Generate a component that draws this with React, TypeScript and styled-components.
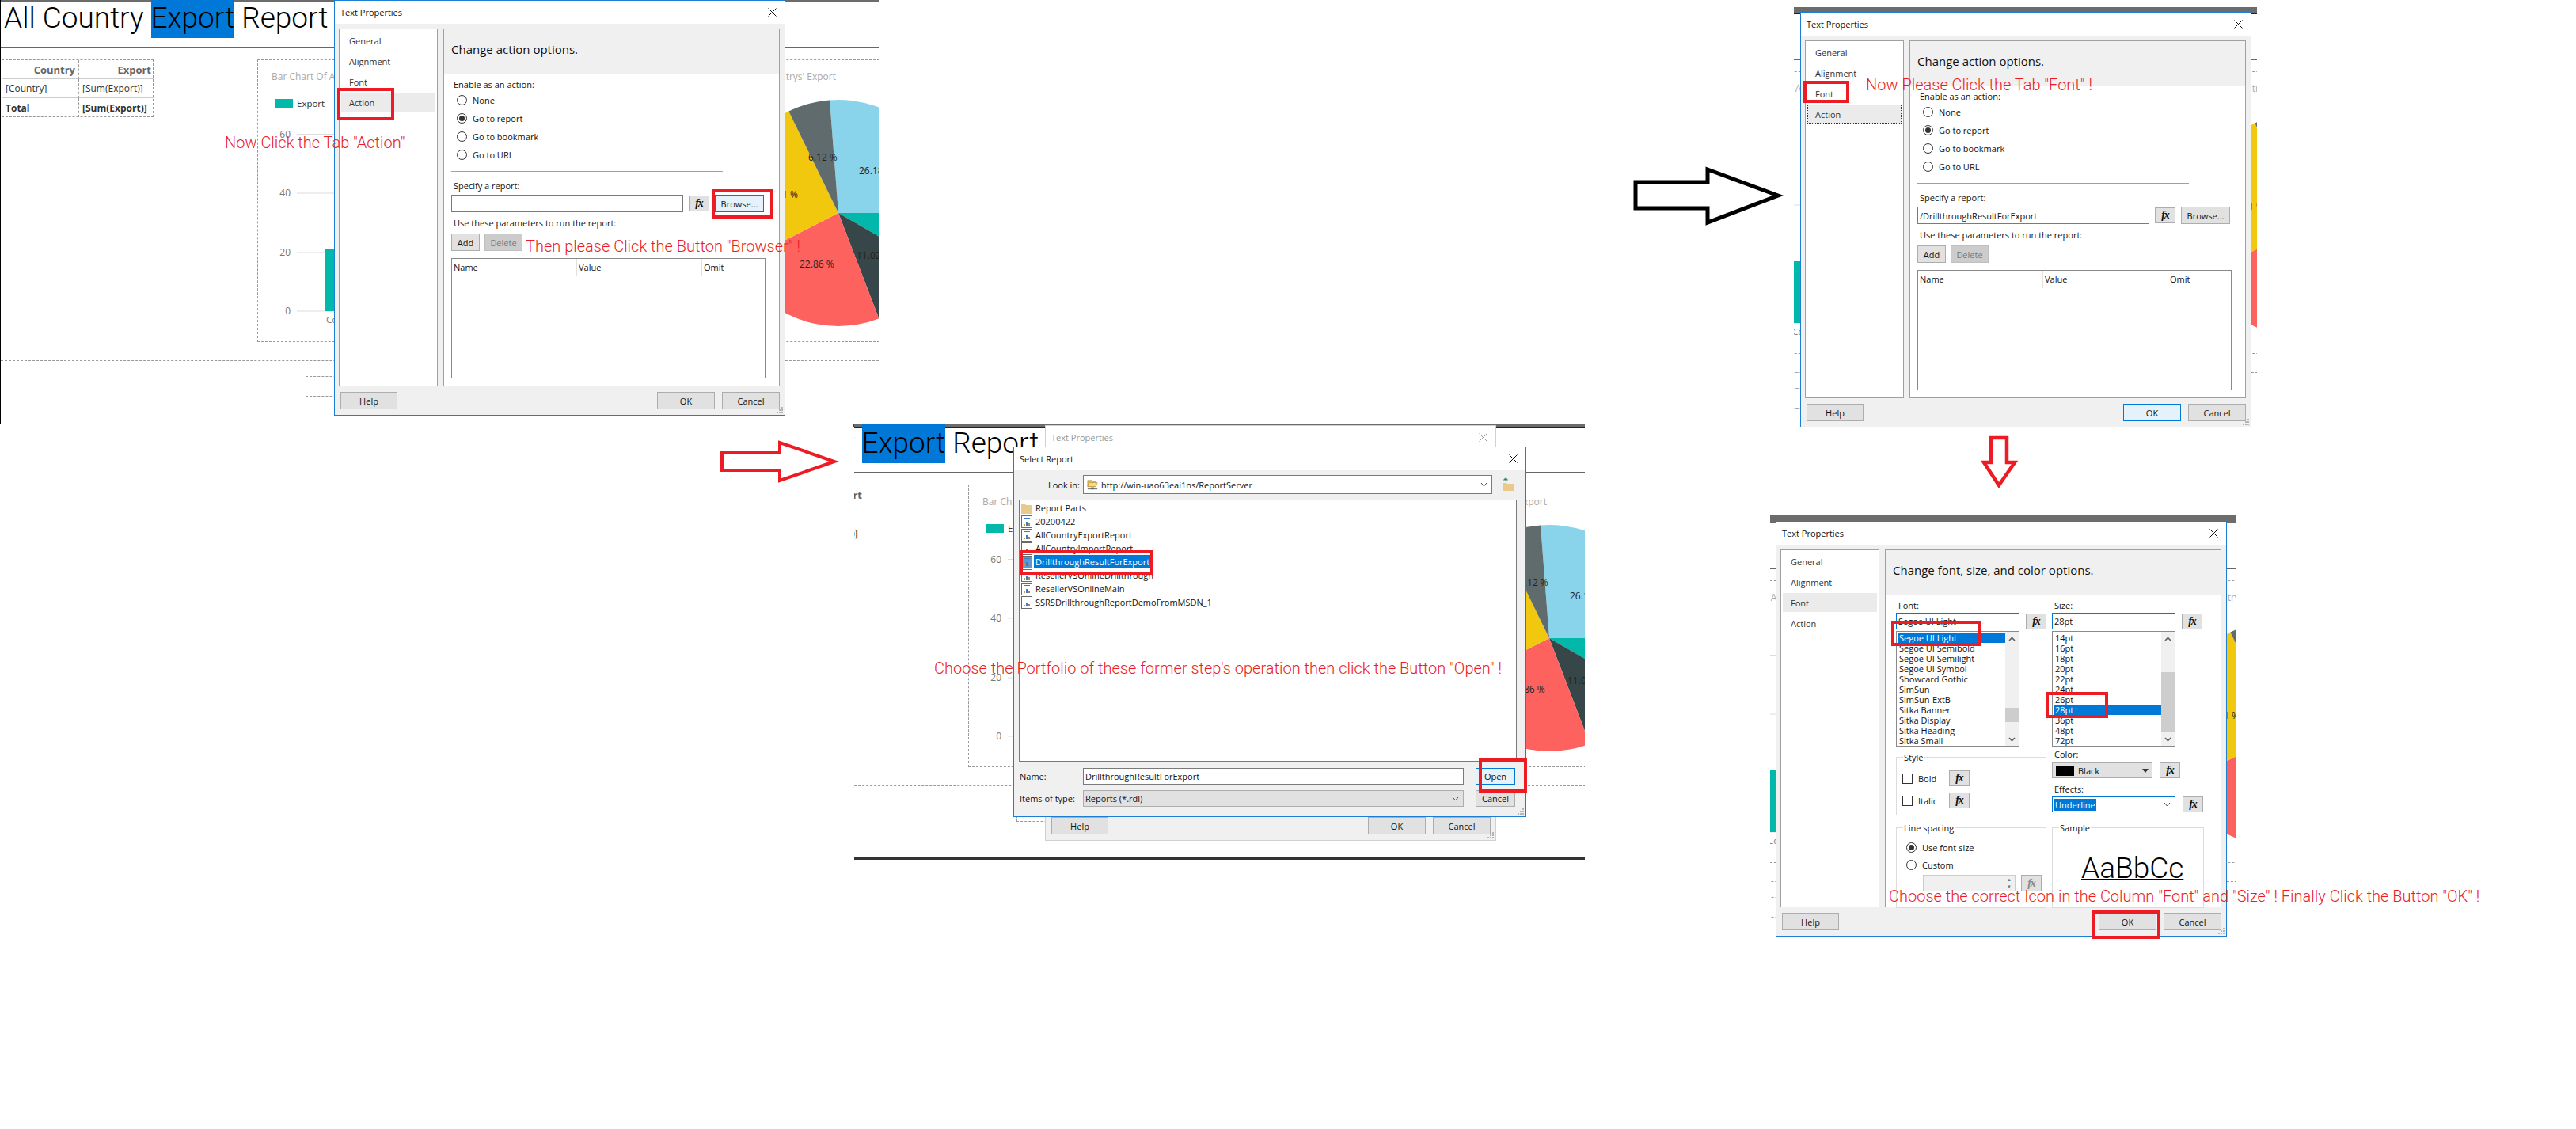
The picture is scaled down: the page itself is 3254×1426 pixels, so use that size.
import React from "react";
import styled, { createGlobalStyle } from "styled-components";

const UI = `"Open Sans", "Liberation Sans", sans-serif`;
const LIGHT = `Roboto, "Open Sans", sans-serif`;

const Global = createGlobalStyle`
  html, body { margin: 0; padding: 0; background: #fff; }
  body { width: 3254px; height: 1426px; overflow: hidden; font-family: ${UI}; font-size: 11px; color: #111; }
  * { box-sizing: border-box; }
`;

type Box = { $x: number; $y: number; $w: number; $h: number };

const Canvas = styled.div`position: relative; width: 3254px; height: 1426px; overflow: hidden;`;
const Shot = styled.section<Box>`
  position: absolute; overflow: hidden; background: #fff;
  left: ${p => p.$x}px; top: ${p => p.$y}px; width: ${p => p.$w}px; height: ${p => p.$h}px;
`;
const Marker = styled.div<Box>`
  position: absolute; border: 4px solid #ed1c24; pointer-events: none;
  left: ${p => p.$x}px; top: ${p => p.$y}px; width: ${p => p.$w}px; height: ${p => p.$h}px;
`;
const Note = styled.div<{ $x: number; $y: number; $sp?: number }>`
  position: absolute; left: ${p => p.$x}px; top: ${p => p.$y}px; white-space: nowrap;
  font-family: ${LIGHT}; font-weight: 300; font-size: 20px; line-height: 24px; color: #ed1c24;
  letter-spacing: ${p => p.$sp ?? 0}px;
`;
const ArrowSvg = styled.svg<Box>`
  position: absolute; left: ${p => p.$x}px; top: ${p => p.$y}px; width: ${p => p.$w}px; height: ${p => p.$h}px;
`;
const CornerTick = styled.div`position: absolute; left: 1078px; top: 535px; width: 32px; height: 4px; background: #444;`;

/* ---------- the report page behind the dialogs ---------- */
const Backdrop = styled.div<{ $srcX: number; $srcY: number }>`
  position: relative; width: 1110px; height: 560px; border-left: 1px solid #000; background: #fff;
  margin-left: ${p => -p.$srcX}px; margin-top: ${p => -p.$srcY}px;
  display: flex; flex-direction: column;
`;
const TopBar = styled.div`height: 11px; background: #6c6c6c; border-bottom: 1px solid #222; flex: none;`;
const TitleBand = styled.header`
  height: 58px; flex: none; border-bottom: 2px solid #666; padding-left: 4px; display: flex; align-items: flex-start;
`;
const ReportTitle = styled.h1`
  margin: 0; font-family: ${LIGHT}; font-weight: 300; font-size: 37px; line-height: 50px; padding-top: 0; margin-top: -5px;
  white-space: pre; color: #000;
`;
const Selected = styled.span`background: #0078d7; display: inline-block; height: 50px;`;
const ReportBody = styled.div`display: flex; padding-top: 14px; flex: none; align-items: flex-start;`;
const Matrix = styled.div`
  width: 192px; margin-left: 1px; display: grid; grid-template-columns: 96px 96px; grid-auto-rows: 24px;
  border: 1px dashed #999; border-right: 1px dashed #999; flex: none; height: 73px;
`;
const Cell = styled.div<{ $head?: boolean; $bold?: boolean; $right?: boolean; $last?: boolean }>`
  display: flex; align-items: center; padding: 0 4px; white-space: nowrap; overflow: hidden;
  justify-content: ${p => (p.$head ? "flex-end" : "flex-start")};
  font-size: ${p => (p.$head ? 13 : 12)}px; font-weight: ${p => (p.$head || p.$bold ? 700 : 400)};
  color: ${p => (p.$head ? "#666" : "#333")};
  border-bottom: ${p => (p.$last ? "0" : "1px solid #ccc")};
  border-left: ${p => (p.$right ? "1px dashed #999" : "0")};
`;
const ChartFrame = styled.div`
  margin-left: 131px; width: 786px; height: 357px; flex: none;
  border: 1px dashed #999; border-right: 0;
`;
const ChartSvg = styled.svg`display: block; width: 785px; height: 355px;`;
const DottedRule = styled.div`height: 0; margin-top: 23px; border-top: 1px dashed #999; flex: none;`;
const FooterBox = styled.div`
  width: 110px; height: 26px; margin: 19px 0 0 385px; border: 1px dashed #999; flex: none;
`;
const BottomBar = styled.div`height: 3px; background: #333; margin-top: 45px; flex: none;`;

const polar = (a: number, r = 143) => {
  const t = ((a - 90) * Math.PI) / 180;
  return [1059 + r * Math.cos(t), 269 + r * Math.sin(t)];
};
const slice = (a: number, b: number) => {
  const [x1, y1] = polar(a);
  const [x2, y2] = polar(b);
  return `M1059 269L${x1} ${y1}A143 143 0 ${b - a > 180 ? 1 : 0} 1 ${x2} ${y2}Z`;
};
const pie: [number, number, string][] = [
  [-4.4, 90, "#8ad4eb"], [90, 120, "#01b8aa"], [120, 159, "#374649"],
  [159, 243, "#fd625e"], [243, 334, "#f2c80f"], [334, 355.6, "#5f6b6d"],
];
const Report = () => (
  <>
    <TopBar />
    <TitleBand>
      <ReportTitle>All Country <Selected>Export</Selected> Report</ReportTitle>
    </TitleBand>
    <ReportBody>
      <Matrix>
        <Cell $head>Country</Cell><Cell $head $right>Export</Cell>
        <Cell>[Country]</Cell><Cell $right>[Sum(Export)]</Cell>
        <Cell $bold $last>Total</Cell><Cell $bold $right $last>[Sum(Export)]</Cell>
      </Matrix>
      <ChartFrame>
        <ChartSvg viewBox="326 76 785 355" fontFamily={UI} fontSize="11.5">
          <text x="343" y="101" fill="#aaa" fontSize="12">Bar Chart Of All Countrys' Export</text>
          <rect x="348" y="125" width="22" height="11" fill="#01b8aa" />
          <text x="375" y="135" fill="#333">Export</text>
          {[[60, 169.5], [40, 244], [20, 319], [0, 393]].map(([v, y]) => (
            <g key={v}>
              <text x="367" y={y + 4} textAnchor="end" fill="#777" fontSize="12">{v}</text>
              <line x1="375" x2="520" y1={y} y2={y} stroke="#ddd" />
            </g>
          ))}
          <rect x="410" y="315" width="60" height="78" fill="#01b8aa" />
          <text x="412" y="408" fill="#777">Country</text>
          <text x="1056" y="101" textAnchor="end" fill="#aaa" fontSize="12">Pie Chart Of All Countrys' Export</text>
          {pie.map(([a, b, c]) => <path key={c} d={slice(a, b)} fill={c} />)}
          <g fill="#222" fontSize="12">
            <text x="1021" y="203">6.12 %</text>
            <text x="1085" y="220">26.18 %</text>
            <text x="1008" y="250" textAnchor="end">24.71 %</text>
            <text x="1010" y="338">22.86 %</text>
            <text x="1082" y="327">11.02 %</text>
          </g>
        </ChartSvg>
      </ChartFrame>
    </ReportBody>
    <DottedRule />
    <FooterBox />
    <BottomBar />
  </>
);

/* ---------- dialog chrome ---------- */
const DialogShell = styled.div<{ $faded?: boolean; $w: number; $h: number; $x: number; $y: number }>`
  position: absolute; left: ${p => p.$x}px; top: ${p => p.$y}px; width: ${p => p.$w}px; height: ${p => p.$h}px;
  background: #f0f0f0; border: 1px solid ${p => (p.$faded ? "#d0d0d0" : "#1a7fd4")};
  display: flex; flex-direction: column;
`;
const TitleBar = styled.div<{ $faded?: boolean }>`
  height: 29px; flex: none; background: #fff; padding: 0 10px 0 7px; display: flex; align-items: center; justify-content: space-between;
  font-size: 11px; color: ${p => (p.$faded ? "#999" : "#111")};
`;
const CloseIcon = ({ faded }: { faded?: boolean }) => (
  <svg width="11" height="11" viewBox="0 0 11 11"><path d="M.5.5l10 10M10.5.5l-10 10" stroke={faded ? "#999" : "#111"} fill="none" /></svg>
);
const Columns = styled.div`display: flex; gap: 7px; margin: 6px 0 0 5px; height: 452px; flex: none;`;
const Sidebar = styled.nav`
  width: 125px; flex: none; background: #fff; border: 1px solid #a0a0a0; padding: 2px 2px; display: flex; flex-direction: column; gap: 2px;
`;
const SideItem = styled.div<{ $on?: boolean; $dotted?: boolean }>`
  height: 24px; display: flex; align-items: center; padding-left: 10px; color: #333;
  background: ${p => (p.$on ? "#ebebeb" : "transparent")};
  outline: ${p => (p.$dotted ? "1px dotted #333" : "none")}; outline-offset: -1px;
`;
const Main = styled.main`width: 425px; flex: none; background: #fff; border: 1px solid #a0a0a0; display: flex; flex-direction: column;`;
const PaneHead = styled.div`
  height: 57px; flex: none; background: #f0f0f0; padding: 14px 0 0 9px; font-size: 15px; line-height: 22px; color: #111;
`;
const Footer = styled.footer`display: flex; gap: 9px; padding: 7px 0 0 7px; width: 562px;`;
const Btn = styled.div<{ $w: number; $h?: number; $primary?: boolean; $off?: boolean }>`
  width: ${p => p.$w}px; height: ${p => p.$h ?? 22}px; flex: none; display: flex; align-items: center; justify-content: center;
  background: ${p => (p.$primary ? "#e5f1fb" : p.$off ? "#cccccc" : "#e1e1e1")};
  border: 1px solid ${p => (p.$primary ? "#0078d7" : p.$off ? "#bfbfbf" : "#adadad")};
  color: ${p => (p.$off ? "#777" : "#111")};
`;
const PushRight = styled.div`margin-left: auto;`;
const FxBtn = styled.div<{ $off?: boolean; $h?: number }>`
  width: 26px; height: ${p => p.$h ?? 20}px; flex: none; display: flex; align-items: center; justify-content: center;
  background: #e1e1e1; border: 1px solid #adadad; font: italic 700 14px "Liberation Serif", serif;
  color: ${p => (p.$off ? "#888" : "#111")}; letter-spacing: -1px;
`;
const Grip = styled.svg`position: absolute; right: 1px; bottom: 1px; width: 10px; height: 10px;`;
const GripIcon = () => (
  <Grip viewBox="0 0 10 10" fill="#b5b5b5">
    <rect x="7" y="1" width="2" height="2" /><rect x="4" y="4" width="2" height="2" /><rect x="7" y="4" width="2" height="2" />
    <rect x="1" y="7" width="2" height="2" /><rect x="4" y="7" width="2" height="2" /><rect x="7" y="7" width="2" height="2" />
  </Grip>
);

const Pane = styled.div`padding: 5px 0 0 9px; display: flex; flex-direction: column;`;
const FieldLabel = styled.div<{ $top?: number }>`
  height: 16px; line-height: 16px; margin: ${p => p.$top ?? 0}px 0 0 3px; color: #111; white-space: nowrap;
`;
const RadioRow = styled.label`display: flex; align-items: center; gap: 7px; height: 23px; padding-left: 7px;`;
const Radio = styled.span<{ $on?: boolean }>`
  width: 13px; height: 13px; flex: none; border-radius: 50%; border: 1px solid #333; background: #fff; position: relative;
  &::after {
    content: ""; position: absolute; inset: 2px; border-radius: 50%; background: #333; display: ${p => (p.$on ? "block" : "none")};
  }
`;
const Rule = styled.div`width: 343px; height: 1px; background: #a0a0a0; margin-top: 9px;`;
const FieldRow = styled.div<{ $top?: number; $gap?: number }>`
  display: flex; align-items: center; gap: ${p => p.$gap ?? 7}px; margin-top: ${p => p.$top ?? 0}px;
`;
const TextInput = styled.div<{ $w: number; $h?: number; $focus?: boolean; $off?: boolean }>`
  width: ${p => p.$w}px; height: ${p => p.$h ?? 22}px; flex: none; display: flex; align-items: center; padding-left: 2px; overflow: hidden;
  background: ${p => (p.$off ? "#f0f0f0" : "#fff")};
  border: 1px solid ${p => (p.$focus ? "#0078d7" : p.$off ? "#ccc" : "#7a7a7a")}; white-space: nowrap;
`;
const ParamTable = styled.div`width: 397px; height: 152px; border: 1px solid #8a8a8a; margin-top: 9px; flex: none;`;
const ParamHead = styled.div`display: grid; grid-template-columns: 158px 158px 1fr; height: 22px;`;
const ParamCol = styled.div<{ $end?: boolean }>`
  padding: 3px 0 0 2px; border-right: ${p => (p.$end ? "0" : "1px solid #e0e0e0")};
`;

const ActionPane = ({ value, focusBrowse }: { value?: string; focusBrowse?: boolean }) => (
  <Pane>
    <FieldLabel>Enable as an action:</FieldLabel>
    <RadioRow><Radio />None</RadioRow>
    <RadioRow><Radio $on />Go to report</RadioRow>
    <RadioRow><Radio />Go to bookmark</RadioRow>
    <RadioRow><Radio />Go to URL</RadioRow>
    <Rule />
    <FieldLabel $top={10}>Specify a report:</FieldLabel>
    <FieldRow $top={3}>
      <TextInput $w={293}>{value}</TextInput>
      <FxBtn>fx</FxBtn>
      <Btn $w={62} $primary={focusBrowse}>Browse...</Btn>
    </FieldRow>
    <FieldLabel $top={6}>Use these parameters to run the report:</FieldLabel>
    <FieldRow $top={5} $gap={6}>
      <Btn $w={36}>Add</Btn>
      <Btn $w={48} $off>Delete</Btn>
    </FieldRow>
    <ParamTable>
      <ParamHead>
        <ParamCol>Name</ParamCol><ParamCol>Value</ParamCol><ParamCol $end>Omit</ParamCol>
      </ParamHead>
    </ParamTable>
  </Pane>
);

/* ---------- font tab ---------- */
const FontGrid = styled.div`display: grid; grid-template-columns: 190px 192px; column-gap: 7px; padding: 5px 0 0 13px;`;
const Col = styled.div`display: flex; flex-direction: column;`;
const ListBox = styled.div`
  width: 156px; height: 146px; margin-top: 2px; border: 1px solid #8a8a8a; background: #fff; display: flex; flex: none; overflow: hidden;
`;
const ListRows = styled.div`flex: 1; padding-top: 1px; min-width: 0;`;
const ListRow = styled.div<{ $on?: boolean }>`
  height: 13px; line-height: 13px; padding-left: 2px; margin-left: 1px; white-space: nowrap;
  background: ${p => (p.$on ? "#0078d7" : "transparent")}; color: ${p => (p.$on ? "#fff" : "#111")};
`;
const ScrollTrack = styled.div`width: 17px; flex: none; background: #f0f0f0; display: flex; flex-direction: column; position: relative;`;
const Thumb = styled.div<{ $top: number; $h: number }>`
  position: absolute; left: 0; right: 0; top: ${p => p.$top}px; height: ${p => p.$h}px; background: #cdcdcd;
`;
const Chevron = styled.svg<{ $down?: boolean }>`
  width: 9px; height: 6px; position: absolute; left: 4px;
  ${p => (p.$down ? "bottom: 5px; transform: rotate(180deg);" : "top: 6px;")}
`;
const Scroll = ({ top, h }: { top: number; h: number }) => (
  <ScrollTrack>
    <Thumb $top={top} $h={h} />
    <Chevron viewBox="0 0 9 6"><path d="M1 5l3.5-3.5L8 5" stroke="#606060" strokeWidth="1.6" fill="none" /></Chevron>
    <Chevron $down viewBox="0 0 9 6"><path d="M1 5l3.5-3.5L8 5" stroke="#606060" strokeWidth="1.6" fill="none" /></Chevron>
  </ScrollTrack>
);
const Group = styled.div<{ $h: number; $top: number }>`
  position: relative; height: ${p => p.$h}px; margin-top: ${p => p.$top}px; border: 1px solid #dcdcdc; flex: none;
`;
const Legend = styled.span`
  position: absolute; left: 8px; top: -8px; height: 16px; line-height: 16px; padding: 0 1px; background: #fff;
`;
const CheckRow = styled.div<{ $y: number }>`
  position: absolute; left: 7px; top: ${p => p.$y}px; display: flex; align-items: center; height: 20px;
`;
const Check = styled.span`width: 13px; height: 13px; border: 1px solid #333; background: #fff; margin-right: 7px; flex: none;`;
const CheckLabel = styled.span`width: 39px; flex: none;`;
const SpacingRadios = styled.div`position: absolute; left: 12px; top: 14px; width: 170px;`;
const SpacingRow = styled(RadioRow)`padding-left: 0; height: 21.5px;`;
const SpinRow = styled(FieldRow)`margin: 2px 0 0 21px;`;
const SpinArrows = styled.span`margin-left: auto; width: 14px; height: 100%; font-size: 6px; line-height: 9px; color: #777; text-align: center; display: flex; flex-direction: column; justify-content: center;`;
const ColorSelect = styled.div`
  width: 127px; height: 20px; flex: none; background: #e1e1e1; border: 1px solid #adadad; display: flex; align-items: center; padding-left: 4px; gap: 5px; position: relative;
`;
const Swatch = styled.span`width: 23px; height: 13px; background: #000;`;
const Caret = styled.span`
  position: absolute; right: 4px; top: 7px; width: 0; height: 0; border: 4px solid transparent; border-top: 5px solid #333; border-bottom: 0;
`;
const SelText = styled.span`background: #0078d7; color: #fff; padding: 0 1px;`;
const DownV = styled.svg`position: absolute; right: 5px; top: 50%; margin-top: -3px; width: 9px; height: 6px;`;
const VIcon = () => <DownV viewBox="0 0 9 6"><path d="M1 1l3.5 4L8 1" stroke="#444" fill="none" /></DownV>;
const InputWrap = styled(TextInput)`position: relative;`;
const SampleText = styled.div`
  position: absolute; left: 36px; top: 30px; font-family: ${LIGHT}; font-weight: 300; font-size: 37px; line-height: 42px; text-decoration: underline; text-decoration-thickness: 2px; color: #000; white-space: nowrap;
`;

const fonts = ["Segoe UI Light", "Segoe UI Semibold", "Segoe UI Semilight", "Segoe UI Symbol", "Showcard Gothic", "SimSun", "SimSun-ExtB", "Sitka Banner", "Sitka Display", "Sitka Heading", "Sitka Small"];
const sizes = ["14pt", "16pt", "18pt", "20pt", "22pt", "24pt", "26pt", "28pt", "36pt", "48pt", "72pt"];

const FontPane = () => (
  <FontGrid>
    <Col>
      <FieldLabel>Font:</FieldLabel>
      <FieldRow $top={1} $gap={8}>
        <TextInput $w={156} $h={21} $focus>Segoe UI Light</TextInput>
        <FxBtn>fx</FxBtn>
      </FieldRow>
      <ListBox>
        <ListRows>{fonts.map(f => <ListRow key={f} $on={f === "Segoe UI Light"}>{f}</ListRow>)}</ListRows>
        <Scroll top={96} h={18} />
      </ListBox>
      <Group $h={74} $top={13}>
        <Legend>Style</Legend>
        <CheckRow $y={16}><Check /><CheckLabel>Bold</CheckLabel><FxBtn>fx</FxBtn></CheckRow>
        <CheckRow $y={44}><Check /><CheckLabel>Italic</CheckLabel><FxBtn>fx</FxBtn></CheckRow>
      </Group>
      <Group $h={102} $top={15}>
        <Legend>Line spacing</Legend>
        <SpacingRadios>
          <SpacingRow><Radio $on />Use font size</SpacingRow>
          <SpacingRow><Radio />Custom</SpacingRow>
          <SpinRow>
            <TextInput $w={117} $h={21} $off><SpinArrows><span>▲</span><span>▼</span></SpinArrows></TextInput>
            <FxBtn $off $h={21}>fx</FxBtn>
          </SpinRow>
        </SpacingRadios>
      </Group>
    </Col>
    <Col>
      <FieldLabel>Size:</FieldLabel>
      <FieldRow $top={1} $gap={8}>
        <TextInput $w={156} $h={21} $focus>28pt</TextInput>
        <FxBtn>fx</FxBtn>
      </FieldRow>
      <ListBox>
        <ListRows>{sizes.map(s => <ListRow key={s} $on={s === "28pt"}>{s}</ListRow>)}</ListRows>
        <Scroll top={51} h={75} />
      </ListBox>
      <FieldLabel $top={2}>Color:</FieldLabel>
      <FieldRow $top={2} $gap={9}>
        <ColorSelect><Swatch />Black<Caret /></ColorSelect>
        <FxBtn>fx</FxBtn>
      </FieldRow>
      <FieldLabel $top={6}>Effects:</FieldLabel>
      <FieldRow $top={1} $gap={9}>
        <InputWrap $w={156} $h={20} $focus><SelText>Underline</SelText><VIcon /></InputWrap>
        <FxBtn>fx</FxBtn>
      </FieldRow>
      <Group $h={102} $top={19}>
        <Legend>Sample</Legend>
        <SampleText>AaBbCc</SampleText>
      </Group>
    </Col>
  </FontGrid>
);

const TextProperties = ({ tab, children, dotted, primaryOk, faded }: { tab: "action" | "font"; children?: React.ReactNode; dotted?: boolean; primaryOk?: boolean; faded?: boolean }) => (
  <DialogShell $x={421} $y={8} $w={570} $h={525} $faded={faded}>
    <TitleBar $faded={faded}>Text Properties<CloseIcon faded={faded} /></TitleBar>
    <Columns>
      <Sidebar>
        <SideItem>General</SideItem>
        <SideItem>Alignment</SideItem>
        <SideItem $on={tab === "font"}>Font</SideItem>
        <SideItem $on={tab === "action"} $dotted={dotted}>Action</SideItem>
      </Sidebar>
      <Main>
        <PaneHead>{tab === "font" ? "Change font, size, and color options." : "Change action options."}</PaneHead>
        {children}
      </Main>
    </Columns>
    <Footer>
      <Btn $w={72}>Help</Btn>
      <PushRight />
      <Btn $w={73} $primary={primaryOk}>OK</Btn>
      <Btn $w={73}>Cancel</Btn>
    </Footer>
    <GripIcon />
  </DialogShell>
);

/* ---------- select report dialog ---------- */
const LookRow = styled.div`display: flex; align-items: center; margin-top: 6px; height: 24px; padding-left: 7px; flex: none;`;
const RowLabel = styled.div<{ $right?: boolean }>`
  width: 80px; flex: none; text-align: ${p => (p.$right ? "right" : "left")}; padding-right: ${p => (p.$right ? 4 : 0)}px; white-space: nowrap;
`;
const Combo = styled.div`
  width: 517px; height: 24px; flex: none; background: #fff; border: 1px solid #7a7a7a; display: flex; align-items: center; gap: 4px; padding-left: 4px; position: relative;
`;
const UpFolder = styled.svg`width: 18px; height: 18px; margin-left: 11px; flex: none;`;
const FileList = styled.div`
  width: 629px; height: 331px; flex: none; margin: 7px 0 0 6px; background: #fff; border: 1px solid #7a7a7a; padding: 1px 0 0 2px;
`;
const FileRow = styled.div`height: 17px; display: flex; align-items: center; gap: 2px; white-space: nowrap;`;
const FileName = styled.span<{ $on?: boolean }>`
  padding: 0 2px; height: 17px; line-height: 17px;
  background: ${p => (p.$on ? "#0078d7" : "transparent")}; color: ${p => (p.$on ? "#fff" : "#111")};
`;
const FileSvg = styled.svg`width: 14px; height: 16px; flex: none;`;
const BottomGrid = styled.div`
  display: grid; grid-template-columns: 80px 481px 50px; column-gap: 0; grid-auto-rows: 21px; row-gap: 7px; padding: 8px 0 0 7px; align-items: center;
`;
const SideBtn = styled(Btn)`margin-left: 15px;`;
const TypeSelect = styled.div`
  height: 21px; background: #e1e1e1; border: 1px solid #adadad; display: flex; align-items: center; padding-left: 2px; position: relative;
`;

const ReportFile = ({ on }: { on?: boolean }) => (
  <FileSvg viewBox="0 0 14 16">
    <rect x=".5" y=".5" width="13" height="15" fill={on ? "#5b9bd5" : "#fff"} stroke="#6a6a6a" />
    <rect x="3" y="3" width="8" height="1" fill="#3a7dc2" />
    <rect x="3" y="11" width="2" height="2" fill="#c99a3c" /><rect x="6" y="8" width="2" height="5" fill="#3a7dc2" /><rect x="9" y="10" width="2" height="3" fill="#8a8a8a" />
  </FileSvg>
);
const Folder = () => (
  <FileSvg viewBox="0 0 14 16"><path d="M0 3h5l1 1h8v11H0z" fill="#eac98c" /></FileSvg>
);
const files = ["20200422", "AllCountryExportReport", "AllCountryImportReport", "DrillthroughResultForExport", "ResellerVSOnlineDrillthrough", "ResellerVSOnlineMain", "SSRSDrillthroughReportDemoFromMSDN_1"];

const SelectReport = () => (
  <DialogShell $x={201} $y={28} $w={648} $h={468}>
    <TitleBar>Select Report<CloseIcon /></TitleBar>
    <LookRow>
      <RowLabel $right>Look in:</RowLabel>
      <Combo>
        <FileSvg viewBox="0 0 16 16">
          <path d="M1 2h6l1 1h5v8H1z" fill="#e8b84a" stroke="#a07a20" strokeWidth=".6" /><path d="M3 5h12l-2 6H1z" fill="#f7d98a" stroke="#a07a20" strokeWidth=".6" />
          <rect x="6" y="12" width="4" height="3" fill="#4a8fd0" /><rect x="1" y="14" width="14" height="1" fill="#555" />
        </FileSvg>
        http://win-uao63eai1ns/ReportServer
        <VIcon />
      </Combo>
      <UpFolder viewBox="0 0 18 18">
        <path d="M2 7h5l1 1h8v9H2z" fill="#eac98c" /><path d="M6 5V1M6 1L3.5 3.5M6 1l2.5 2.5" stroke="#2f8f6f" strokeWidth="1.4" fill="none" />
      </UpFolder>
    </LookRow>
    <FileList>
      <FileRow><Folder /><FileName>Report Parts</FileName></FileRow>
      {files.map(f => (
        <FileRow key={f}><ReportFile on={f === "DrillthroughResultForExport"} /><FileName $on={f === "DrillthroughResultForExport"}>{f}</FileName></FileRow>
      ))}
    </FileList>
    <BottomGrid>
      <RowLabel>Name:</RowLabel>
      <TextInput $w={481} $h={21}>DrillthroughResultForExport</TextInput>
      <SideBtn $w={50} $h={21} $primary>Open</SideBtn>
      <RowLabel>Items of type:</RowLabel>
      <TypeSelect>Reports (*.rdl)<VIcon /></TypeSelect>
      <SideBtn $w={50} $h={21}>Cancel</SideBtn>
    </BottomGrid>
    <GripIcon />
  </DialogShell>
);

export default function App() {
  return (
    <Canvas>
      <Global />
      <Shot $x={0} $y={0} $w={1110} $h={535}>
        <Backdrop $srcX={0} $srcY={8}>
          <Report />
          <TextProperties tab="action"><ActionPane focusBrowse /></TextProperties>
        </Backdrop>
      </Shot>
      <CornerTick />

      <Shot $x={1079} $y={536} $w={923} $h={550}>
        <Backdrop $srcX={181} $srcY={7}>
          <Report />
          <TextProperties tab="action" faded><ActionPane value="" /></TextProperties>
        </Backdrop>
        <SelectReport />
      </Shot>

      <Shot $x={2266} $y={9} $w={585} $h={530}>
        <Backdrop $srcX={414} $srcY={2}>
          <Report />
          <TextProperties tab="action" dotted primaryOk><ActionPane value="/DrillthroughResultForExport" /></TextProperties>
        </Backdrop>
      </Shot>

      <Shot $x={2236} $y={650} $w={588} $h={535}>
        <Backdrop $srcX={415} $srcY={0}>
          <Report />
          <TextProperties tab="font" primaryOk={false}><FontPane /></TextProperties>
        </Backdrop>
      </Shot>

      <ArrowSvg $x={905} $y={552} $w={156} $h={62} viewBox="905 552 156 62">
        <path d="M912 572H985V559L1054 583L985 607V594H912Z" fill="#fff" stroke="#ed1c24" strokeWidth="4" />
      </ArrowSvg>
      <ArrowSvg $x={2058} $y={205} $w={196} $h={85} viewBox="2058 205 196 85">
        <path d="M2066 230H2157V214L2246 247L2157 281V263H2066Z" fill="#fff" stroke="#000" strokeWidth="5" />
      </ArrowSvg>
      <ArrowSvg $x={2498} $y={546} $w={54} $h={74} viewBox="2498 546 54 74">
        <path d="M2515 553H2535V584H2545L2525 613L2506 584H2515Z" fill="#fff" stroke="#ed1c24" strokeWidth="4.5" />
      </ArrowSvg>

      <Marker $x={426} $y={111} $w={72} $h={41} />
      <Marker $x={899} $y={239} $w={78} $h={37} />
      <Marker $x={1288} $y={695} $w={169} $h={31} />
      <Marker $x={1868} $y={958} $w={61} $h={43} />
      <Marker $x={2278} $y={102} $w={58} $h={28} />
      <Marker $x={2389} $y={784} $w={114} $h={32} />
      <Marker $x={2584} $y={874} $w={79} $h={33} />
      <Marker $x={2643} $y={1150} $w={86} $h={36} />

      <Note $x={284} $y={168}>Now Click the Tab "Action"</Note>
      <Note $x={664} $y={299}>Then please Click the Button "Browser" !</Note>
      <Note $x={2357} $y={95}>Now Please Click the Tab "Font" !</Note>
      <Note $x={1180} $y={832}>Choose the Portfolio of these former step's operation then click the Button "Open" !</Note>
      <Note $x={2386} $y={1120}>Choose the correct Icon in the Column "Font" and "Size" ! Finally Click the Button "OK" !</Note>
    </Canvas>
  );
}
